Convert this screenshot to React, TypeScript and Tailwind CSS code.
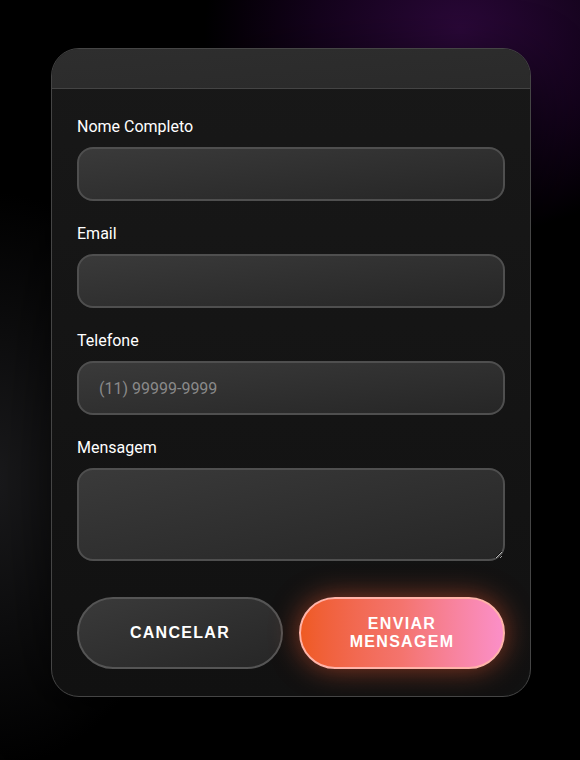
import React from "react";

const fieldClass =
  "w-full rounded-2xl border-2 border-[#4f4f4f] bg-gradient-to-br from-[#3a3a3a] to-[#262626] px-5 text-[16px] text-white placeholder:text-[#8a8a8a] outline-none";

const Field = ({ label, placeholder }: { label: string; placeholder?: string }) => (
  <div className="flex flex-col">
    <label className="mb-[8px] pt-px text-[16px] leading-6 text-white">{label}</label>
    <input className={`${fieldClass} h-[54px]`} placeholder={placeholder} />
  </div>
);

export default function App() {
  return (
    <div
      className="relative min-h-[760px] w-full overflow-hidden bg-black"
      style={{ fontFamily: "Roboto, 'Liberation Sans', sans-serif" }}
    >
      {/* glows */}
      <div className="pointer-events-none absolute -right-[140px] -top-[180px] h-[420px] w-[520px] rounded-full bg-[radial-gradient(closest-side,#2a0838,#14031c_55%,transparent)]" />
      <div className="pointer-events-none absolute -left-[220px] top-[180px] h-[600px] w-[420px] rounded-full bg-[radial-gradient(closest-side,#1a1a1c,transparent)]" />

      <div className="relative pl-[51px] pt-12">
        <div className="w-[480px] overflow-hidden rounded-[28px] border border-[#454545] bg-gradient-to-b from-[#181818] to-[#111] shadow-[0_20px_60px_rgba(0,0,0,0.6)]">
          <div className="h-[40px] border-b border-[#444] bg-gradient-to-br from-[#2e2e2e] to-[#2a2a2a]" />
          <div className="flex flex-col gap-[20px] px-[25px] pb-[27px] pt-[25px]">
            <Field label="Nome Completo" />
            <Field label="Email" />
            <Field label="Telefone" placeholder="(11) 99999-9999" />
            <div className="flex flex-col">
              <label className="mb-[8px] pt-px text-[16px] leading-6 text-white">Mensagem</label>
              <textarea className={`${fieldClass} h-[93px] py-3`} />
            </div>
            <div className="mt-[16px] grid grid-cols-2 gap-4">
              <button
                className="h-[72px] rounded-full border-2 border-[#555] bg-gradient-to-br from-[#3a3a3a] to-[#262626] text-[16px] font-bold uppercase tracking-[1.3px] text-white"
                style={{ fontFamily: "'Liberation Sans', Arial, sans-serif" }}
              >
                Cancelar
              </button>
              <button
                className="h-[72px] rounded-full border-2 border-[#ffb3a8] bg-gradient-to-r from-[#ef5a22] via-[#f4746e] to-[#fb8fc8] px-10 text-[16px] font-bold uppercase leading-[18px] tracking-[1.3px] text-white shadow-[0_0_28px_rgba(240,90,50,0.55)]"
                style={{ fontFamily: "'Liberation Sans', Arial, sans-serif" }}
              >
                Enviar Mensagem
              </button>
            </div>
          </div>
        </div>
      </div>
    </div>
  );
}
